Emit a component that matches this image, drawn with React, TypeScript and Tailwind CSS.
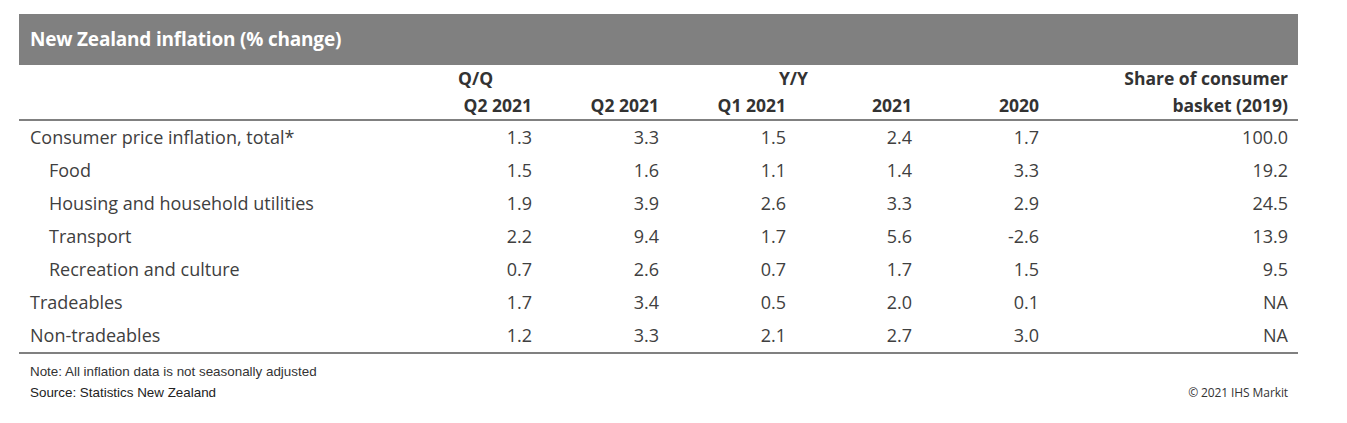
import React from 'react';

type Row = {
  label: string;
  indent?: boolean;
  values: string[];
};

const rows: Row[] = [
  { label: 'Consumer price inflation, total*', values: ['1.3', '3.3', '1.5', '2.4', '1.7', '100.0'] },
  { label: 'Food', indent: true, values: ['1.5', '1.6', '1.1', '1.4', '3.3', '19.2'] },
  { label: 'Housing and household utilities', indent: true, values: ['1.9', '3.9', '2.6', '3.3', '2.9', '24.5'] },
  { label: 'Transport', indent: true, values: ['2.2', '9.4', '1.7', '5.6', '-2.6', '13.9'] },
  { label: 'Recreation and culture', indent: true, values: ['0.7', '2.6', '0.7', '1.7', '1.5', '9.5'] },
  { label: 'Tradeables', values: ['1.7', '3.4', '0.5', '2.0', '0.1', 'NA'] },
  { label: 'Non-tradeables', values: ['1.2', '3.3', '2.1', '2.7', '3.0', 'NA'] },
];

const gridCols = 'grid grid-cols-[386px_127px_127px_127px_126px_127px_249px_10px]';

const App = () => {
  return (
    <div className="w-[1347px] h-[423px] bg-white pt-[14px] pl-[19px] font-['Open_Sans','Noto_Sans',sans-serif] text-[#333]">
      <div className="w-[1279px]">
        <div className="h-[51px] bg-[#808080] flex items-center pl-[11px]">
          <span className="text-white font-bold text-[19px] tracking-[-0.2px]">New Zealand inflation (% change)</span>
        </div>

        <div className="border-b-[2px] border-[#808080] font-bold text-[17.5px] text-[#333]">
          <div className={gridCols + ' h-[27px] items-center'}>
            <div />
            <div className="col-start-2 flex justify-end">
              <span className="w-[74px] text-left">Q/Q</span>
            </div>
            <div className="col-start-3 col-span-3 text-right pr-[104px]">Y/Y</div>
            <div className="col-start-7 text-right">Share of consumer</div>
          </div>
          <div className={gridCols + ' h-[27px] items-center'}>
            <div />
            <div className="text-right">Q2 2021</div>
            <div className="text-right">Q2 2021</div>
            <div className="text-right">Q1 2021</div>
            <div className="text-right">2021</div>
            <div className="text-right">2020</div>
            <div className="text-right">basket (2019)</div>
          </div>
        </div>

        <div className="border-b-[2px] border-[#808080] text-[18px] text-[#404040]">
          {rows.map((row, idx) => (
            <div key={'row' + idx} className={gridCols + ' h-[33px] items-center'}>
              <div className={row.indent ? 'pl-[30px]' : 'pl-[11px]'}>{row.label}</div>
              {row.values.map((v, i) => (
                <div key={i} className="text-right">
                  {v}
                </div>
              ))}
            </div>
          ))}
        </div>

        <div className="flex justify-between pl-[11px] pr-[10px] pt-[7px]">
          <div className="font-['Liberation_Sans',Arial,sans-serif] text-[13.4px] text-[#333] leading-[21px]">
            <div>Note: All inflation data is not seasonally adjusted</div>
            <div className="text-[#222]">Source: Statistics New Zealand</div>
          </div>
          <div className="self-end text-[12px] text-[#333] leading-[21px] tracking-[-0.1px]">© 2021 IHS Markit</div>
        </div>
      </div>
    </div>
  );
};

export default App;
